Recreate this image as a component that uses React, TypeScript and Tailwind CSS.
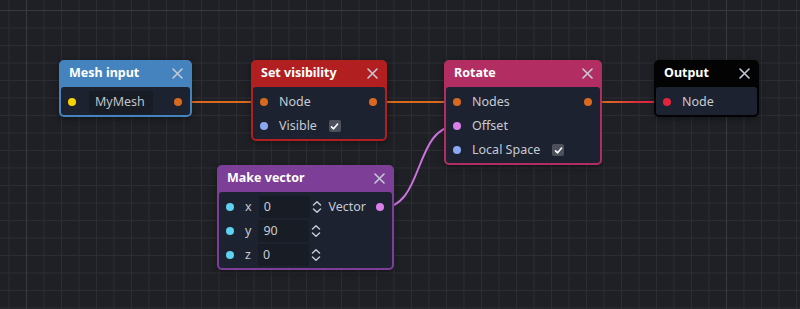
import React from "react";

type Row = {
  label?: string;
  inColor?: string;
  outColor?: string;
  check?: boolean;
  field?: string;
  num?: string;
  outLabel?: string;
};

type NodeDef = {
  title: string;
  x: number;
  y: number;
  w: number;
  header: string;
  border: string;
  rows: Row[];
};

const ORANGE = "#d9691f";
const BLUE = "#8ba8f5";
const PINK = "#d97fea";
const CYAN = "#5fd0f0";

const NODES: NodeDef[] = [
  {
    title: "Mesh input",
    x: 59,
    y: 60,
    w: 133,
    header: "bg-[#4483bd]",
    border: "border-[#4483bd]",
    rows: [{ inColor: "#f7d200", field: "MyMesh", outColor: ORANGE }],
  },
  {
    title: "Set visibility",
    x: 251,
    y: 60,
    w: 136,
    header: "bg-[#b11f21]",
    border: "border-[#b11f21]",
    rows: [
      { label: "Node", inColor: ORANGE, outColor: ORANGE },
      { label: "Visible", inColor: BLUE, check: true },
    ],
  },
  {
    title: "Rotate",
    x: 444,
    y: 60,
    w: 158,
    header: "bg-[#b22d61]",
    border: "border-[#b22d61]",
    rows: [
      { label: "Nodes", inColor: ORANGE, outColor: ORANGE },
      { label: "Offset", inColor: PINK },
      { label: "Local Space", inColor: BLUE, check: true },
    ],
  },
  {
    title: "Output",
    x: 654,
    y: 60,
    w: 105,
    header: "bg-[#030303]",
    border: "border-[#030303]",
    rows: [{ label: "Node", inColor: "#e3253b" }],
  },
  {
    title: "Make vector",
    x: 217,
    y: 165,
    w: 177,
    header: "bg-[#7c3e97]",
    border: "border-[#7c3e97]",
    rows: [
      { label: "x", inColor: CYAN, num: "0", outLabel: "Vector", outColor: PINK },
      { label: "y", inColor: CYAN, num: "90" },
      { label: "z", inColor: CYAN, num: "0" },
    ],
  },
];

function Dot({ color }: { color: string }) {
  return <span className="block w-[8px] h-[8px] rounded-full shrink-0" style={{ backgroundColor: color }} />;
}

function CloseIcon() {
  return (
    <svg width="11" height="11" viewBox="0 0 11 11" className="shrink-0">
      <path d="M1 1L10 10M10 1L1 10" stroke="#c3cad6" strokeWidth="1.6" strokeLinecap="round" />
    </svg>
  );
}

function Check() {
  return (
    <span className="flex items-center justify-center w-[12px] h-[12px] rounded-[2px] bg-[#4c515b] ml-[12px]">
      <svg width="9" height="9" viewBox="0 0 9 9">
        <path d="M1.5 4.8L3.6 6.8L7.6 2" stroke="#ffffff" strokeWidth="1.6" fill="none" strokeLinecap="round" strokeLinejoin="round" />
      </svg>
    </span>
  );
}

function Spinner() {
  return (
    <svg width="10" height="14" viewBox="0 0 10 14" className="ml-[2px]">
      <path d="M1.5 5L5 1.8L8.5 5M1.5 9L5 12.2L8.5 9" stroke="#c5cad3" strokeWidth="1.5" fill="none" strokeLinecap="round" strokeLinejoin="round" />
    </svg>
  );
}

function NodeRow({ row }: { row: Row }) {
  return (
    <div className="flex items-center h-[24px] pl-[7px] pr-[8px]">
      {row.inColor ? <Dot color={row.inColor} /> : <span className="w-[8px]" />}
      {row.field && (
        <span className="ml-[13px] h-[23px] w-[64px] flex items-center pl-[6px] bg-[#171c25] rounded-[2px] text-[#bfc4cc]">
          {row.field}
        </span>
      )}
      {row.label && <span className="ml-[11px] text-[#c6cbd3]">{row.label}</span>}
      {row.num !== undefined && (
        <>
          <span className="ml-[7px] h-[22px] w-[51px] flex items-center pl-[5px] bg-[#171c25] rounded-[2px] text-[#c6cbd3]">
            {row.num}
          </span>
          <Spinner />
        </>
      )}
      {row.check && <Check />}
      <span className="flex-1" />
      {row.outLabel && <span className="mr-[10px] text-[#c6cbd3]">{row.outLabel}</span>}
      {row.outColor && <Dot color={row.outColor} />}
    </div>
  );
}

function GraphNode({ node }: { node: NodeDef }) {
  return (
    <div
      className={`absolute flex flex-col rounded-[5px] border-2 ${node.border} ${node.header} shadow-[0_2px_6px_rgba(0,0,0,0.35)]`}
      style={{ left: node.x, top: node.y, width: node.w }}
    >
      <div className="flex items-center justify-between h-[25px] pl-[8px] pr-[7px] pb-[2px]">
        <span className="font-bold text-white text-[12.5px]">{node.title}</span>
        <CloseIcon />
      </div>
      <div className="bg-[#1c2230] rounded-[3px] pt-[3px] pb-[1px] text-[12.5px]">
        {node.rows.map((r, i) => (
          <NodeRow key={i} row={r} />
        ))}
      </div>
    </div>
  );
}

function Wires() {
  return (
    <svg className="absolute inset-0" width="800" height="309" viewBox="0 0 800 309">
      <defs>
        <linearGradient id="or" x1="588" y1="0" x2="667" y2="0" gradientUnits="userSpaceOnUse">
          <stop offset="0.25" stopColor={ORANGE} />
          <stop offset="0.65" stopColor="#df2a3d" />
        </linearGradient>
      </defs>
      <path d="M178 102H265" stroke={ORANGE} strokeWidth="2" />
      <path d="M374 102H457" stroke={ORANGE} strokeWidth="2" />
      <path d="M588 102H667" stroke="url(#or)" strokeWidth="2" />
      <path d="M381 208C425 208 413 126 457 126" stroke="#cc72df" strokeWidth="2" fill="none" />
    </svg>
  );
}

export default function App() {
  return (
    <div
      className="relative w-[800px] h-[309px] overflow-hidden bg-[#1f2025] font-['Noto_Sans',sans-serif] [background-image:linear-gradient(to_right,#393a40_1px,transparent_1px),linear-gradient(to_bottom,#393a40_1px,transparent_1px),linear-gradient(to_right,#2c2d33_1px,transparent_1px),linear-gradient(to_bottom,#2c2d33_1px,transparent_1px)] [background-size:700px_700px,700px_700px,17.5px_17.5px,17.5px_17.5px] [background-position:26px_10px,26px_10px,8.5px_10px,8.5px_10px]"
    >
      <Wires />
      {NODES.map((n) => (
        <GraphNode key={n.title} node={n} />
      ))}
    </div>
  );
}
